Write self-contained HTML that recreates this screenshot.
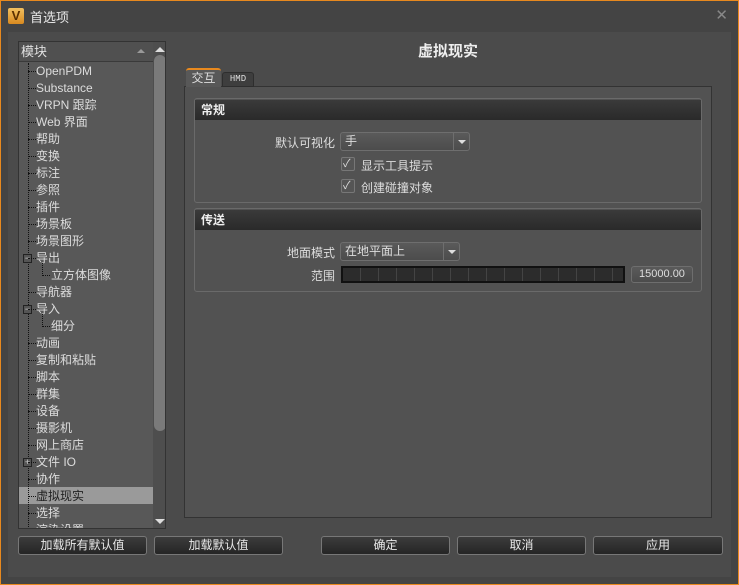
<!DOCTYPE html>
<html><head><meta charset="utf-8"><style>
*{box-sizing:border-box;margin:0;padding:0}
body{width:739px;height:585px;background:#444;font-family:"Liberation Sans","Noto Sans CJK SC",sans-serif;font-size:12px;color:#ddd;position:relative;overflow:hidden}
.win{position:absolute;left:0;top:0;width:739px;height:585px;border:1px solid #e8891e;background:#444}
.a{position:absolute}
.title{left:30px;top:7px;font-size:13px;color:#e8e8e8}
.logo{left:8px;top:8px;width:16px;height:16px;background:linear-gradient(#f2c060,#d98a20);color:#5a3000;font-weight:bold;font-size:13px;text-align:center;line-height:16px;border-radius:2px}
.close{right:11px;top:6px;font-size:15px;color:#888}
.inner{left:8px;top:32px;width:723px;height:545px;background:#4b4b4b}
.tree{left:18px;top:41px;width:148px;height:488px;background:#585858;border:1px solid #333;overflow:hidden}
.th{left:0;top:0;width:135px;height:20px;background:#505050;border-bottom:1px solid #3a3a3a;padding-left:2px;font-size:13px;line-height:20px;color:#e0e0e0}
.sb{left:134px;top:0;width:13px;height:486px;background:#4e4e4e}
.thumb{left:135px;top:13px;width:12px;height:376px;background:#7a7a7a;border-radius:6px}
.item{position:absolute;left:17px;height:17px;line-height:17px;color:#dcdcdc;font-size:12px;white-space:nowrap}
.vline{position:absolute;left:9px;top:21px;width:0;height:470px;border-left:1px dotted #111}
.hd{position:absolute;width:8px;border-top:1px dotted #111}
.sel{position:absolute;left:0;width:134px;height:17px;background:#9a9a9a}
.pm{position:absolute;left:4px;width:9px;height:9px;border:1px solid #222;background:#555;font-size:9px;line-height:7px;text-align:center;color:#ccc}
.panel{left:184px;top:86px;width:528px;height:432px;background:#525252;border:1px solid #333}
.tab1{left:186px;top:68px;width:35px;height:19px;background:#585858;border-top:2px solid #e8891e;border-radius:3px 3px 0 0;text-align:center;line-height:17px;font-size:12px}
.tab2{left:222px;top:72px;width:32px;height:15px;background:#3e3e3e;border:1px solid #2e2e2e;border-radius:3px 3px 0 0;text-align:center;line-height:13px;font-size:9px;font-family:"Liberation Mono",monospace}
.hdr{left:184px;top:40px;width:528px;text-align:center;font-size:15px;font-weight:bold;color:#eee}
.grp{border:1px solid #6a6a6a;border-radius:3px}
.gb{left:0;top:1px;width:100%;height:20px;background:linear-gradient(#3a3a3a,#2a2a2a);padding-left:6px;font-weight:bold;line-height:20px;color:#eee;font-size:12px}
.lbl{text-align:right;font-size:12px;color:#ddd}
.combo{height:19px;border:1px solid #6e6e6e;border-radius:3px;background:linear-gradient(#5a5a5a,#4c4c4c);padding-left:4px;line-height:17px}
.combo .ar{position:absolute;right:0;top:0;width:16px;height:17px;border-left:1px solid #6e6e6e}
.combo .ar:after{content:"";position:absolute;left:4px;top:7px;border:4px solid transparent;border-top:4px solid #ddd;border-bottom:0}
.cb{width:14px;height:14px;border:1px solid #777;border-radius:2px;background:#555}
.ck{font-size:11px;line-height:12px}
.btn{top:536px;height:19px;border:1px solid #777;border-radius:3px;background:linear-gradient(#3c3c3c,#252525);text-align:center;line-height:17px;font-size:12px;color:#e8e8e8}
</style></head><body><div class="win"></div>
<div class="a logo">V</div><div class="a title">首选项</div><div class="a close">✕</div>
<div class="a inner"></div>
<div class="a tree">
<div class="a th">模块</div>
<div class="a" style="left:118px;top:7px;border:4px solid transparent;border-bottom:4px solid #999;border-top:0"></div>
<div class="a sb"></div><div class="a thumb"></div>
<div class="a" style="left:136px;top:5px;border:5px solid transparent;border-bottom:5px solid #ddd;border-top:0"></div>
<div class="a" style="left:136px;top:477px;border:5px solid transparent;border-top:5px solid #ddd;border-bottom:0"></div>
<div class="sel" style="top:445px"></div>
<div class="vline"></div>
<div id="items"></div>
</div>
<div class="a hdr">虚拟现实</div>
<div class="a panel"></div>
<div class="a tab1">交互</div><div class="a tab2">HMD</div>
<div class="a grp" style="left:194px;top:98px;width:508px;height:105px">
<div class="a gb">常规</div>
<div class="a lbl" style="left:60px;top:35px;width:80px">默认可视化</div>
<div class="a combo" style="left:145px;top:33px;width:130px">手<div class="ar"></div></div>
<div class="a cb" style="left:146px;top:58px"></div><div class="a ck" style="left:148px;top:59px">✓</div>
<div class="a" style="left:166px;top:58px">显示工具提示</div>
<div class="a cb" style="left:146px;top:80px"></div><div class="a ck" style="left:148px;top:81px">✓</div>
<div class="a" style="left:166px;top:80px">创建碰撞对象</div>
</div>
<div class="a grp" style="left:194px;top:208px;width:508px;height:84px">
<div class="a gb">传送</div>
<div class="a lbl" style="left:60px;top:35px;width:80px">地面模式</div>
<div class="a combo" style="left:145px;top:33px;width:120px">在地平面上<div class="ar"></div></div>
<div class="a lbl" style="left:60px;top:58px;width:80px">范围</div>
<div class="a" style="left:146px;top:57px;width:284px;height:17px;background:repeating-linear-gradient(90deg,#2c2c2c 0,#2c2c2c 17px,#444 17px,#444 18px);border:2px solid #111"></div>
<div class="a combo" style="left:436px;top:57px;width:62px;height:17px;line-height:15px;font-size:11px;text-align:center;padding:0">15000.00</div>
</div>
<div class="a btn" style="left:18px;width:129px">加载所有默认值</div>
<div class="a btn" style="left:154px;width:129px">加载默认值</div>
<div class="a btn" style="left:321px;width:129px">确定</div>
<div class="a btn" style="left:457px;width:129px">取消</div>
<div class="a btn" style="left:593px;width:130px">应用</div>
<script>
var it=["OpenPDM","Substance","VRPN 跟踪","Web 界面","帮助","变换","标注","参照","插件","场景板","场景图形","-导出",">立方体图像","导航器","-导入",">细分","动画","复制和粘贴","脚本","群集","设备","摄影机","网上商店","+文件 IO","协作","虚拟现实","选择","渲染设置"];
var h="";
it.forEach(function(t,i){var y=21+i*17;var x=17,c=t[0];
if(c=="-"||c=="+"){h+='<div class="pm" style="top:'+(y+4)+'px">'+(c=="-"?"−":"+")+'</div>';t=t.slice(1);}
if(c==">"){t=t.slice(1);x=32;h+='<div class="a" style="left:23px;top:'+(y-4)+'px;height:13px;border-left:1px dotted #111"></div><div class="hd" style="left:23px;top:'+(y+8)+'px"></div>';}
else h+='<div class="hd" style="left:9px;top:'+(y+8)+'px"></div>';
h+='<div class="item" style="left:'+x+'px;top:'+y+'px;'+(i==25?'color:#222':'')+'">'+t+'</div>';});
document.getElementById("items").innerHTML=h;
</script>
</body></html>
